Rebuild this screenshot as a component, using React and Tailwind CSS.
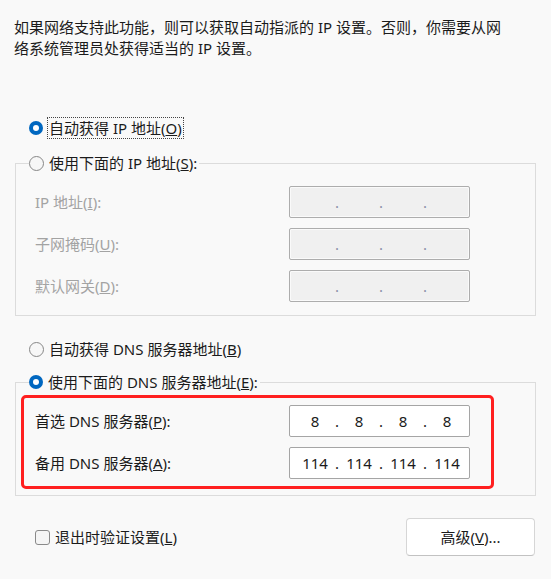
import React from "react";

function Radio({ checked }) {
  if (checked) {
    return (
      <span className="flex h-[14px] w-[14px] shrink-0 items-center justify-center rounded-full bg-[#0067c0]">
        <span className="h-[6px] w-[6px] rounded-full bg-white" />
      </span>
    );
  }
  return <span className="h-[15px] w-[15px] shrink-0 rounded-full border border-[#878787] bg-[#f7f7f7]" />;
}

function Key({ k }) {
  return <u className="underline-offset-[1px]">{k}</u>;
}

function IpField({ values, disabled }) {
  const segs = values || ["", "", "", ""];
  return (
    <div
      className={
        disabled
          ? "flex h-[32px] w-[181px] items-center rounded-[2px] border border-[#adadad] bg-[#f0f0f0] pl-[5px] shadow-[inset_0_0_0_1px_#fafafa]"
          : "flex h-[32px] w-[181px] items-center rounded-[2px] border border-[#a5a5a5] bg-white pl-[5px]"
      }
    >
      {segs.map((v, i) => (
        <React.Fragment key={i}>
          <span className="w-[40px] text-center">{v}</span>
          {i < 3 && (
            <span className={disabled ? "w-[4px] text-center text-[#8c90aa]" : "w-[4px] text-center"}>.</span>
          )}
        </React.Fragment>
      ))}
    </div>
  );
}

function Row({ label, children, disabled, pad }) {
  return (
    <div className={`flex h-[32px] items-center ${pad}`}>
      <span className={disabled ? "w-[254px] text-[#a3a3a3]" : "w-[254px]"}>{label}</span>
      {children}
    </div>
  );
}

export default function App() {
  return (
    <div className="h-[579px] w-[551px] overflow-hidden bg-[#f9f9f9] font-['Noto_Sans','Noto_Sans_CJK_SC',sans-serif] text-[15px] leading-[22px] text-[#1b1b1b]">
      <p className="whitespace-nowrap pl-[14px] pt-[17px] leading-[21px]">
        如果网络支持此功能，则可以获取自动指派的 IP 设置。否则，你需要从网
        <br />
        络系统管理员处获得适当的 IP 设置。
      </p>

      <div className="mt-[58px] flex h-[22px] items-center pl-[29px]">
        <Radio checked />
        <span className="ml-[4px] border border-dotted border-[#444] px-[1px] leading-[20px]">
          自动获得 IP 地址(<Key k="O" />)
        </span>
      </div>

      <fieldset className="ml-[15px] mt-[13px] w-[521px] border border-[#dcdcdc] pb-[13px]">
        <legend className="ml-[13px] flex h-[22px] items-center pr-[2px]">
          <Radio />
          <span className="ml-[5px]">使用下面的 IP 地址(<Key k="S" />):</span>
        </legend>
        <div className="flex flex-col gap-[10px] pt-[12px]">
          <Row label={<>IP 地址(<Key k="I" />):</>} disabled pad="pl-[19px]">
            <IpField disabled />
          </Row>
          <Row label={<>子网掩码(<Key k="U" />):</>} disabled pad="pl-[19px]">
            <IpField disabled />
          </Row>
          <Row label={<>默认网关(<Key k="D" />):</>} disabled pad="pl-[19px]">
            <IpField disabled />
          </Row>
        </div>
      </fieldset>

      <div className="mt-[22px] flex h-[22px] items-center pl-[29px]">
        <Radio />
        <span className="ml-[5px]">自动获得 DNS 服务器地址(<Key k="B" />)</span>
      </div>

      <fieldset className="ml-[15px] mt-[11px] w-[521px] border border-[#dcdcdc] pb-[6px]">
        <legend className="ml-[13px] flex h-[22px] items-center pr-[2px]">
          <Radio checked />
          <span className="ml-[5px]">使用下面的 DNS 服务器地址(<Key k="E" />):</span>
        </legend>
        <div className="ml-[5px] mt-[2px] flex w-[473px] flex-col gap-[10px] rounded-[5px] border-[3px] border-[#ff1f1f] py-[7px]">
          <Row label={<>首选 DNS 服务器(<Key k="P" />):</>} pad="pl-[11px]">
            <IpField values={["8", "8", "8", "8"]} />
          </Row>
          <Row label={<>备用 DNS 服务器(<Key k="A" />):</>} pad="pl-[11px]">
            <IpField values={["114", "114", "114", "114"]} />
          </Row>
        </div>
      </fieldset>

      <div className="mt-[22px] flex items-center justify-between pl-[35px] pr-[16px]">
        <label className="flex items-center">
          <span className="h-[15px] w-[15px] rounded-[3px] border border-[#8a8a8a] bg-[#f5f5f5]" />
          <span className="ml-[5px]">退出时验证设置(<Key k="L" />)</span>
        </label>
        <button className="flex h-[38px] w-[129px] items-center justify-center rounded-[4px] border border-[#d6d6d6] border-b-[#c2c2c2] bg-white">
          高级(<Key k="V" />)...
        </button>
      </div>
    </div>
  );
}
